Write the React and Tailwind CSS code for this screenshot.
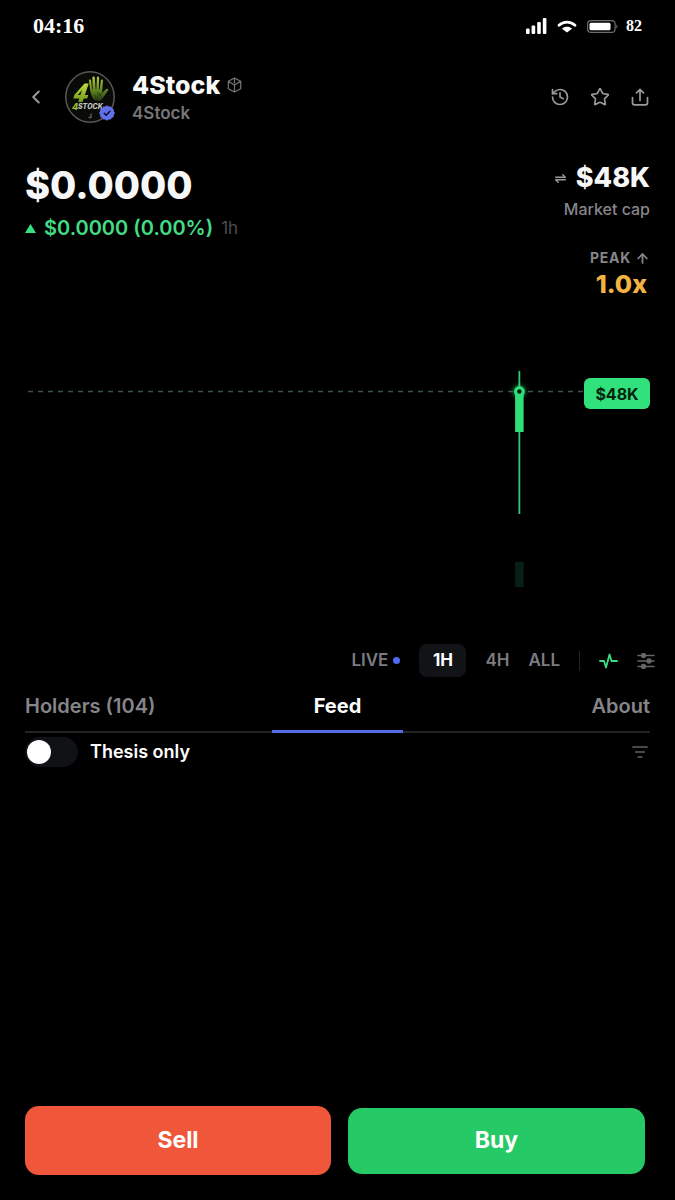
import { useState } from 'react'
import { ArrowUp, ChevronLeft, History, Star } from 'lucide-react'

const RANGES = ['LIVE', '1H', '4H', 'ALL']

function StatusBar() {
  return (
    <div className="flex h-[52px] items-center justify-between px-[33px] font-['Liberation_Serif',serif] font-bold text-white">
      <span className="text-[22px] leading-6">04:16</span>
      <div className="flex items-center">
        <svg width="21" height="16" viewBox="0 0 21 16" fill="#fff" aria-hidden="true">
          <rect x="0" y="10.5" width="3.6" height="5.5" rx="1" />
          <rect x="5.6" y="7.5" width="3.6" height="8.5" rx="1" />
          <rect x="11.2" y="4" width="3.6" height="12" rx="1" />
          <rect x="16.8" y="0" width="3.6" height="16" rx="1" />
        </svg>
        <svg className="ml-2.5" width="20" height="13" viewBox="0 0 20 13" aria-hidden="true">
          <path d="M2 5.2C6.5 1 13.5 1 18 5.2" fill="none" stroke="#fff" strokeWidth="2.8" strokeLinecap="round" />
          <path d="M5 8.8C7.8 6.2 12.2 6.2 15 8.8L10 12.6Z" fill="#fff" />
        </svg>
        <svg className="ml-2.5" width="31" height="13" viewBox="0 0 31 13" aria-hidden="true">
          <rect x="0.6" y="0.6" width="27.5" height="11.8" rx="3.5" fill="none" stroke="#6d6d6d" strokeWidth="1.2" />
          <rect x="2.5" y="2.8" width="21" height="7.5" rx="1.5" fill="#fff" />
          <path d="M29.3 4.5v4c1.5-.6 1.5-3.4 0-4z" fill="#6d6d6d" />
        </svg>
        <span className="ml-2 text-base leading-6">82</span>
      </div>
    </div>
  )
}

function Avatar() {
  return (
    <div className="relative h-[52px] w-[50px]">
      <svg width="50" height="52" viewBox="0 0 50 52" role="img" aria-label="4Stock">
        <defs>
          <linearGradient id="lime" x1="0" y1="0" x2="0" y2="1">
            <stop offset="0" stopColor="#c3d93b" />
            <stop offset="1" stopColor="#6d9a1c" />
          </linearGradient>
          <linearGradient id="hand" x1="0" y1="0" x2="0" y2="1">
            <stop offset="0" stopColor="#b4cf3a" />
            <stop offset="0.6" stopColor="#5c8222" />
            <stop offset="1" stopColor="#1f3810" />
          </linearGradient>
        </defs>
        <ellipse cx="25" cy="26" rx="24.2" ry="25.2" fill="#0a0b09" stroke="#5a5752" strokeWidth="1.5" />
        {/* big slanted four */}
        <path d="M19.5 12.5h4.200l-3.800 11.500h3.300l-1 3.400h-3.400L17.500 31h-4.300l1.200-3.600H8.300l1-3.400zM17 19l-4.200 5h2.600z" fill="url(#lime)" />
        {/* open hand */}
        <path d="M24 9.5c0-1.500 1.900-1.500 2.100 0l1 9h.6l-.3-12c0-1.500 2.300-1.500 2.400 0l.9 12h.6l.6-12c0-1.500 2.200-1.500 2.200 0l-.2 12h.7l1.300-9c.3-1.500 2.200-1.200 2 .3l-.8 12 4.200-3.800c1.400-1 2.600.2 1.700 1.400-2.500 3-4 7.500-8 10.500l-5.800-1c-3-3-4.200-9-5.200-19.400z" fill="url(#hand)" />
        <path d="m29 24 5 5m-2-8 6 6m-8 1 8-7" stroke="#25370f" strokeWidth="0.8" />
        <text x="7" y="39" fill="#9dbb2d" fontFamily="Inter, sans-serif" fontSize="9" fontWeight="800" fontStyle="italic">4</text>
        <text x="13" y="38" fill="#c4c4c0" fontFamily="Inter, sans-serif" fontSize="7" fontWeight="800" fontStyle="italic">STOCK</text>
        <path d="M26 42.5v4h-2.5" fill="none" stroke="#5c5c5c" strokeWidth="1.4" />
      </svg>
      <svg className="absolute right-0 bottom-0.5" width="16" height="16" viewBox="0 0 16 16" role="img" aria-label="Verified">
        <path d="m8 .3 1.700 1.300 2.100-.2 1 1.800 1.900.9.100 2.100L16 8l-1.200 1.800-.1 2.100-1.900.9-1 1.800-2.100-.2L8 15.700l-1.700-1.300-2.100.2-1-1.800-1.900-.9-.1-2.100L0 8l1.200-1.800.1-2.100 1.900-.9 1-1.800 2.100.2z" fill="#6370ee" />
        <path d="m5.2 8.200 2 2 3.700-3.900" fill="none" stroke="#0b0c1c" strokeWidth="1.5" strokeLinecap="round" strokeLinejoin="round" />
      </svg>
    </div>
  )
}

function Header() {
  return (
    <header className="flex h-[90px] items-center px-[25px] text-[#99999c]">
      <button type="button" aria-label="Back" className="-ml-0.5 flex w-[26px] justify-center">
        <ChevronLeft size={22} strokeWidth={2.2} />
      </button>
      <div className="ml-4">
        <Avatar />
      </div>
      <div className="ml-[17px]">
        <div className="flex items-center gap-[7px]">
          <h1 className="text-[25px] font-extrabold leading-8 text-[#fafafa]">4Stock</h1>
          <svg width="15" height="16" viewBox="0 0 15 16" fill="none" stroke="#77777a" strokeWidth="1.2" strokeLinejoin="round" aria-hidden="true">
            <path d="M7.5 1 13.700 4.300v7.400L7.500 15l-6.200-3.300V4.300zM7.500 1v5.500M1.300 4.300 7.500 8l6.200-3.700M7.500 8v7" />
          </svg>
        </div>
        <p className="text-[17px] font-semibold leading-6 text-[#77777a]">4Stock</p>
      </div>
      <div className="ml-auto flex items-center gap-5">
        <button type="button" aria-label="History"><History size={20} strokeWidth={2} /></button>
        <button type="button" aria-label="Favourite"><Star size={20} strokeWidth={2} /></button>
        <button type="button" aria-label="Share">
          <svg width="20" height="20" viewBox="0 0 20 20" fill="none" stroke="currentColor" strokeWidth="1.7" strokeLinecap="round" strokeLinejoin="round">
            <path d="M2.5 10.5v5.300a2 2 0 0 0 2 2h11a2 2 0 0 0 2-2v-5.300M10 13.500V2.500M6.500 5.800 10 2.300l3.500 3.500" />
          </svg>
        </button>
      </div>
    </header>
  )
}

function Prices() {
  return (
    <section className="flex justify-between px-[25px] pt-5">
      <div className="pt-[3px]">
        <p className="text-[38px] font-extrabold leading-10 text-[#f7f7f8]">$0.0000</p>
        <p className="mt-[9px] flex items-center text-xl font-semibold leading-7 text-[#43dc86]">
          <svg className="mr-2" width="11" height="9" viewBox="0 0 11 9" aria-hidden="true">
            <path d="M5.5 0 11 9H0z" fill="#35e383" />
          </svg>
          $0.0000 (0.00%)
          <span className="ml-2 text-[17px] font-normal text-[#4c4c50]">1h</span>
        </p>
      </div>
      <div className="flex flex-col items-end">
        <p className="flex items-center gap-2.5 text-[27px] font-extrabold leading-8 text-[#f7f7f8]">
          <svg width="11" height="9" viewBox="0 0 11 9" fill="none" stroke="#99999c" strokeWidth="1.4" strokeLinecap="round" strokeLinejoin="round" aria-hidden="true">
            <path d="M.7 3.200h9.600L7.800.7M10.300 5.800H.7l2.500 2.500" />
          </svg>
          $48K
        </p>
        <p className="mt-[3px] text-base font-medium leading-6 text-[#85858a]">Market cap</p>
        <p className="mt-[27px] flex items-center gap-1 text-sm font-bold leading-5 tracking-wider text-[#85858a]">
          PEAK
          <ArrowUp size={15} strokeWidth={2.8} />
        </p>
        <p className="pr-[3px] text-[25px] font-extrabold leading-8 text-[#f2b344]">1.0x</p>
      </div>
    </section>
  )
}

function Chart() {
  return (
    <div className="relative mx-[25px] h-[344px]">
      <svg className="h-full w-full overflow-visible" role="img" aria-label="Market cap chart">
        <defs>
          <filter id="glow" x="-100%" y="-100%" width="300%" height="300%">
            <feGaussianBlur stdDeviation="2.5" />
          </filter>
        </defs>
        <line x1="3" y1="91.5" x2="100%" y2="91.5" stroke="#3c5348" strokeWidth="1.3" strokeDasharray="5 5" />
        <line x1="79.1%" x2="79.1%" y1="71" y2="214" stroke="#35c873" strokeWidth="1.8" />
        <line x1="79.1%" x2="79.1%" y1="92" y2="132" stroke="#2fe078" strokeWidth="8.5" />
        <line x1="79.1%" x2="79.1%" y1="262" y2="287" stroke="#071f16" strokeWidth="8.5" />
        <circle cx="79.1%" cy="91.5" r="6" fill="#2fe078" opacity="0.7" filter="url(#glow)" />
        <circle cx="79.1%" cy="91.5" r="3.8" fill="#04180c" stroke="#2fe078" strokeWidth="3.2" />
      </svg>
      <span className="absolute right-0 top-[78px] flex h-[31px] w-[66px] items-center justify-center rounded-md bg-[#31e17b] text-base font-bold text-[#04230f]">
        $48K
      </span>
    </div>
  )
}

function RangeBar() {
  const [range, setRange] = useState('1H')

  return (
    <div className="flex h-[33px] items-center justify-end gap-[19px] pr-5 text-[17px] font-semibold text-[#7c7c80]">
      {RANGES.map((r) => (
        <button
          key={r}
          type="button"
          onClick={() => setRange(r)}
          className={
            r === range
              ? 'h-[33px] w-[47px] rounded-lg bg-[#111317] font-bold text-white'
              : 'flex items-center'
          }
        >
          {r}
          {r === 'LIVE' && <span className="ml-[5px] h-[7px] w-[7px] rounded-full bg-[#4d6bf0]" />}
        </button>
      ))}
      <span className="h-5 w-px bg-[#26262a]" />
      <button type="button" aria-label="Line chart">
        <svg width="19" height="16" viewBox="0 0 19 16" fill="none" stroke="#3ddc84" strokeWidth="1.8" strokeLinecap="round" strokeLinejoin="round">
          <path d="M1 8h4L7 14.500 10.500 1.500 12.500 8H18" />
        </svg>
      </button>
      <button type="button" aria-label="Chart settings">
        <svg width="18" height="16" viewBox="0 0 18 16" fill="#66666a" stroke="#66666a" strokeWidth="1.5" strokeLinecap="round">
          <path d="M1 2.500h16M1 8h16M1 13.500h16" />
          <circle cx="6.5" cy="2.5" r="1.9" />
          <circle cx="12" cy="8" r="1.9" />
          <circle cx="6.5" cy="13.5" r="1.9" />
        </svg>
      </button>
    </div>
  )
}

function Tabs() {
  return (
    <nav className="mx-[25px] mt-[13px] grid h-[43px] grid-cols-[1fr_131px_1fr] border-b-2 border-[#232326] text-xl font-semibold leading-8 text-[#85858a]">
      <button type="button" className="flex justify-start">Holders (104)</button>
      <button type="button" className="-mb-0.5 flex justify-center border-b-3 border-[#4f6be6] font-bold text-white">Feed</button>
      <button type="button" className="flex justify-end">About</button>
    </nav>
  )
}

function Filters() {
  const [thesis, setThesis] = useState(false)

  return (
    <div className="flex items-center justify-between px-[25px] pt-1">
      <label className="flex items-center gap-3 text-lg font-semibold text-white">
        <input
          type="checkbox"
          role="switch"
          checked={thesis}
          onChange={(e) => setThesis(e.target.checked)}
          className="flex h-[30px] w-[53px] appearance-none items-center rounded-full bg-[#101216] px-0.5 before:h-6 before:w-6 before:rounded-full before:bg-white checked:justify-end checked:bg-[#4f6be6]"
        />
        Thesis only
      </label>
      <button type="button" aria-label="Filter" className="mr-0.5">
        <svg width="16" height="12" viewBox="0 0 16 12" stroke="#606064" strokeWidth="1.4" strokeLinecap="round">
          <path d="M.8 1h14.400M3.500 6h9M6 11h4" />
        </svg>
      </button>
    </div>
  )
}

export default function App() {
  return (
    <div className="flex min-h-screen flex-col bg-black font-['Inter',sans-serif]">
      <StatusBar />
      <Header />
      <Prices />
      <Chart />
      <RangeBar />
      <Tabs />
      <Filters />
      <footer className="mt-auto flex items-center gap-[17px] pb-[25px] pl-[25px] pr-[30px] text-[23px] font-bold text-white">
        <button type="button" className="h-[69px] flex-[306] rounded-[14px] bg-[#f0573a]">Sell</button>
        <button type="button" className="h-[66px] flex-[297] rounded-[14px] bg-[#25c965]">Buy</button>
      </footer>
    </div>
  )
}
